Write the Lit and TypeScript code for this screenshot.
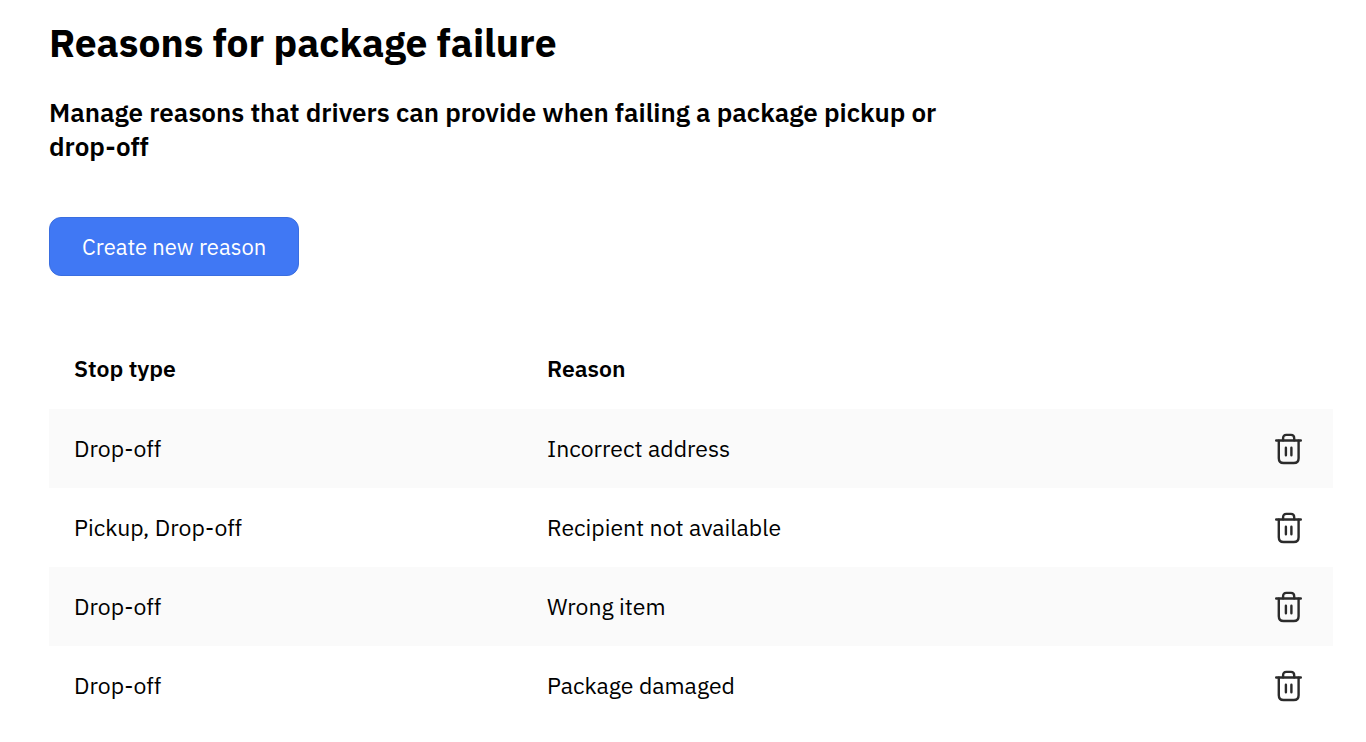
import { LitElement, html, css } from "lit";
import { customElement, property } from "lit/decorators.js";

interface FailureReason {
  stopType: string;
  reason: string;
}

@customElement("trash-icon")
class TrashIcon extends LitElement {
  static styles = css`
    :host { display: block; width: 28px; height: 32px; }
    .icon { display: block; width: 100%; height: 100%; }
  `;
  render() {
    return html`<svg class="icon" viewBox="0 0 28 32" fill="none" stroke="#2b2b2b" stroke-width="2.4" stroke-linecap="round" stroke-linejoin="round" aria-hidden="true">
      <path d="M1.2 7.5H25.8" />
      <path d="M8.1 7.3V5.2Q8.1 1.9 11.3 1.9H16Q19.2 1.9 19.2 5.2V7.3" />
      <path d="M3.8 7.7V25.2Q3.8 30 8.6 30H18.8Q23.6 30 23.6 25.2V7.7" />
      <path d="M10.9 14.8V22.2M16.4 14.8V22.2" />
    </svg>`;
  }
}

@customElement("app-root")
class AppRoot extends LitElement {
  @property({ attribute: false }) reasons: FailureReason[] = [
    { stopType: "Drop-off", reason: "Incorrect address" },
    { stopType: "Pickup, Drop-off", reason: "Recipient not available" },
    { stopType: "Drop-off", reason: "Wrong item" },
    { stopType: "Drop-off", reason: "Package damaged" },
  ];

  static styles = css`
    :host {
      display: block;
      background: #fff;
      color: #000;
      font-family: "IBM Plex Sans", "Noto Sans", sans-serif;
    }
    .page { padding: 17px 33px 16px 49px; }
    .title { margin: 0; font-size: 39px; line-height: 52px; font-weight: 700; }
    .subtitle { margin: 26px 0 0; max-width: 920px; font-size: 26px; line-height: 34px; font-weight: 600; }
    .create {
      display: block;
      margin: 54px 0 0;
      padding: 14px 32px;
      border: 1px solid #3a6ee0;
      border-radius: 12px;
      background: #4078f4;
      color: #fff;
      font: 400 22px/29px "IBM Plex Sans", "Noto Sans", sans-serif;
      cursor: pointer;
    }
    .table { width: 100%; margin-top: 54px; border-collapse: collapse; table-layout: fixed; font-size: 23px; line-height: 31px; }
    .cell { padding: 24px 25px; text-align: left; font-weight: 400; }
    .head { padding: 23px 25px 25px; font-weight: 600; }
    .type { width: 423px; }
    .actions { width: 60px; padding: 0 30px 0 0; }
    .row:nth-child(odd) { background: #fafafa; }
    .delete { display: block; margin-left: auto; padding: 0; border: 0; background: none; cursor: pointer; }
  `;

  render() {
    return html`<main class="page">
      <h1 class="title">Reasons for package failure</h1>
      <p class="subtitle">Manage reasons that drivers can provide when failing a package pickup or drop-off</p>
      <button class="create" type="button">Create new reason</button>
      <table class="table">
        <thead>
          <tr>
            <th class="cell head type" scope="col">Stop type</th>
            <th class="cell head" scope="col">Reason</th>
            <td class="actions"></td>
          </tr>
        </thead>
        <tbody>
          ${this.reasons.map((r) => html`<tr class="row">
            <td class="cell">${r.stopType}</td>
            <td class="cell">${r.reason}</td>
            <td class="actions">
              <button class="delete" type="button" aria-label="Delete ${r.reason}"><trash-icon></trash-icon></button>
            </td>
          </tr>`)}
        </tbody>
      </table>
    </main>`;
  }
}
